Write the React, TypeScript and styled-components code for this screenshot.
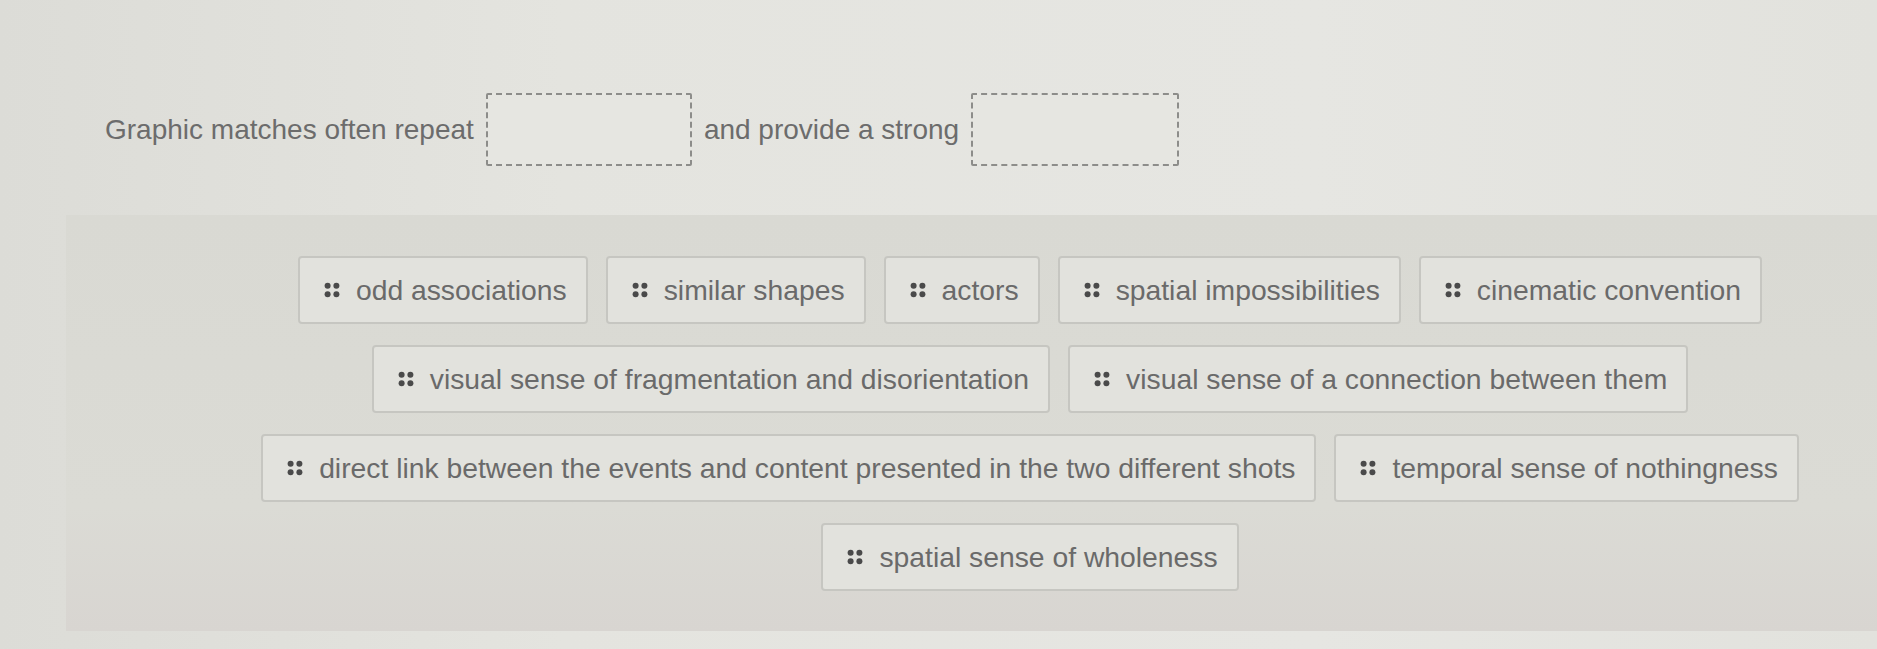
import React from 'react'
import styled, { createGlobalStyle } from 'styled-components'

const GlobalStyle = createGlobalStyle`
  html, body {
    margin: 0;
    padding: 0;
    background: #e3e3de;
  }
  body {
    font-family: 'Liberation Sans', Arial, sans-serif;
    color: #686868;
  }
`

const Page = styled.div`
  width: 1877px;
  height: 649px;
  overflow: hidden;
  display: flex;
  flex-direction: column;
  background: linear-gradient(90deg, #dcdcd7 0%, #e4e4df 30%, #e6e6e2 70%, #e2e2dd 100%);
`

const Prompt = styled.div`
  height: 215px;
  box-sizing: border-box;
  padding: 93px 0 0 105px;
  display: flex;
  align-items: flex-start;
  gap: 12px;
  font-size: 28px;
  line-height: 73px;
  color: #6c6c6c;
`

const PromptText = styled.span`
  white-space: nowrap;
`

const DropSlot = styled.div<{ $width: number }>`
  width: ${({ $width }) => $width}px;
  height: 73px;
  box-sizing: border-box;
  border: 2px dashed #8d8d8a;
  border-radius: 2px;
  background: #e6e6e1;
`

const Bank = styled.div`
  margin-left: 66px;
  height: 416px;
  box-sizing: border-box;
  padding: 41px 0 0 139px;
  background: linear-gradient(180deg, #d9d9d3 0%, #dbdbd5 70%, #d8d5d1 100%);
`

const ChipWrap = styled.div`
  width: 1650px;
  display: flex;
  flex-wrap: wrap;
  justify-content: center;
  column-gap: 18px;
  row-gap: 21px;
`

const Chip = styled.div`
  height: 68px;
  box-sizing: border-box;
  display: flex;
  align-items: center;
  gap: 16px;
  padding: 0 19px 0 24px;
  border: 2px solid #c6c6c1;
  border-radius: 4px;
  background: #e2e2dd;
  font-size: 28.3px;
  color: #6a6a6a;
  white-space: nowrap;
  cursor: grab;
`

const Grip = styled.svg`
  flex: none;
  width: 16px;
  height: 16px;
`

const DragGrip = () => (
  <Grip viewBox="0 0 16 16">
    <g fill="#4a4a4a">
      <circle cx="3.6" cy="3.8" r="3" />
      <circle cx="12.4" cy="3.8" r="3" />
      <circle cx="3.6" cy="12.2" r="3" />
      <circle cx="12.4" cy="12.2" r="3" />
    </g>
  </Grip>
)

const answers = [
  'odd associations',
  'similar shapes',
  'actors',
  'spatial impossibilities',
  'cinematic convention',
  'visual sense of fragmentation and disorientation',
  'visual sense of a connection between them',
  'direct link between the events and content presented in the two different shots',
  'temporal sense of nothingness',
  'spatial sense of wholeness',
]

export default function App() {
  return (
    <>
      <GlobalStyle />
      <Page>
        <Prompt>
          <PromptText>Graphic matches often repeat</PromptText>
          <DropSlot $width={206} />
          <PromptText>and provide a strong</PromptText>
          <DropSlot $width={208} />
        </Prompt>
        <Bank>
          <ChipWrap>
            {answers.map((label) => (
              <Chip key={label}>
                <DragGrip />
                <span>{label}</span>
              </Chip>
            ))}
          </ChipWrap>
        </Bank>
      </Page>
    </>
  )
}
